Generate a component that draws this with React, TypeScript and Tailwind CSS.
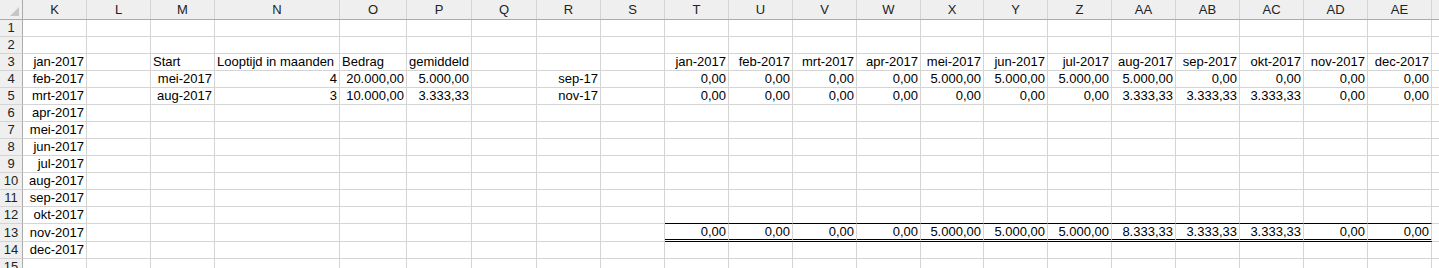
import React from 'react';

type Col = { name: string; w: number; label?: boolean };

const cols: Col[] = [
  { name: 'K', w: 64 },
  { name: 'L', w: 64 },
  { name: 'M', w: 64 },
  { name: 'N', w: 125 },
  { name: 'O', w: 67 },
  { name: 'P', w: 65 },
  { name: 'Q', w: 65 },
  { name: 'R', w: 64 },
  { name: 'S', w: 64 },
  { name: 'T', w: 64 },
  { name: 'U', w: 64 },
  { name: 'V', w: 64 },
  { name: 'W', w: 64 },
  { name: 'X', w: 63 },
  { name: 'Y', w: 64 },
  { name: 'Z', w: 64 },
  { name: 'AA', w: 64 },
  { name: 'AB', w: 64 },
  { name: 'AC', w: 64 },
  { name: 'AD', w: 64 },
  { name: 'AE', w: 64 },
  // AF sits mostly off screen, its letter is not visible
  { name: 'AF', w: 64, label: false },
];

const months = ['jan', 'feb', 'mrt', 'apr', 'mei', 'jun', 'jul', 'aug', 'sep', 'okt', 'nov', 'dec'].map(
  (m) => `${m}-2017`
);

const row4 = ['0,00', '0,00', '0,00', '0,00', '5.000,00', '5.000,00', '5.000,00', '5.000,00', '0,00', '0,00', '0,00', '0,00'];
const row5 = ['0,00', '0,00', '0,00', '0,00', '0,00', '0,00', '0,00', '3.333,33', '3.333,33', '3.333,33', '0,00', '0,00'];
const row13 = ['0,00', '0,00', '0,00', '0,00', '5.000,00', '5.000,00', '5.000,00', '8.333,33', '3.333,33', '3.333,33', '0,00', '0,00'];

type Cell = { v: string; left?: boolean };

// cell contents keyed by row number, then column letter
function buildData() {
  const data: Record<number, Record<string, Cell>> = {};
  for (let r = 1; r <= 15; r++) data[r] = {};
  months.forEach((m, i) => {
    data[i + 3].K = { v: m };
  });
  const tCols = cols.slice(9, 21).map((c) => c.name);
  data[3].M = { v: 'Start', left: true };
  data[3].N = { v: 'Looptijd in maanden', left: true };
  data[3].O = { v: 'Bedrag', left: true };
  data[3].P = { v: 'gemiddeld', left: true };
  data[4].M = { v: 'mei-2017' };
  data[4].N = { v: '4' };
  data[4].O = { v: '20.000,00' };
  data[4].P = { v: '5.000,00' };
  data[4].R = { v: 'sep-17' };
  data[5].M = { v: 'aug-2017' };
  data[5].N = { v: '3' };
  data[5].O = { v: '10.000,00' };
  data[5].P = { v: '3.333,33' };
  data[5].R = { v: 'nov-17' };
  tCols.forEach((c, i) => {
    data[3][c] = { v: months[i] };
    data[4][c] = { v: row4[i] };
    data[5][c] = { v: row5[i] };
    data[13][c] = { v: row13[i] };
  });
  return { data, tCols };
}

const { data, tCols } = buildData();

function rowHeight(r: number) {
  return r === 13 ? 'h-[18px]' : 'h-[17px]';
}

export default function App() {
  const rows = Array.from({ length: 15 }, (_, i) => i + 1);

  return (
    <div
      className="w-[1439px] h-[268px] overflow-hidden bg-white text-[13px] text-black"
      style={{ fontFamily: '"Liberation Sans", Arial, sans-serif' }}
    >
      {/* column headers */}
      <div className="flex h-[20px] bg-[#efefef] border-b border-[#ababab] text-[#222]">
        <div className="w-[23px] shrink-0 border-r border-[#ababab] flex items-end justify-end pr-[3px] pb-[3px]">
          <svg width="9" height="9" viewBox="0 0 9 9">
            <polygon points="9,0 9,9 0,9" fill="#c6c6c6" />
          </svg>
        </div>
        {cols.map((c) => (
          <div
            key={c.name}
            className="shrink-0 border-r border-[#d4d4d4] flex items-center justify-center leading-[16px]"
            style={{ width: c.w }}
          >
            {c.label === false ? '' : c.name}
          </div>
        ))}
      </div>

      {rows.map((r) => (
        <div key={r} className={`flex ${rowHeight(r)}`}>
          <div className="w-[23px] shrink-0 bg-[#efefef] border-r border-b border-[#ababab] border-b-[#d4d4d4] text-[#222] flex items-center justify-center leading-[16px]">
            {r}
          </div>
          {cols.map((c) => {
            const cell = data[r][c.name];
            const isTotalCol = tCols.includes(c.name);
            let border = 'border-b border-[#d4d4d4]';
            if (isTotalCol && r === 12) border = 'border-b border-b-black border-r-[#d4d4d4]';
            if (isTotalCol && r === 13) border = 'border-b-[3px] border-double border-b-black border-r-[#d4d4d4]';
            return (
              <div
                key={c.name}
                className={`shrink-0 border-r border-[#d4d4d4] ${border} flex items-center leading-[16px] whitespace-nowrap overflow-visible ${
                  cell?.left ? 'justify-start pl-[2px]' : 'justify-end pr-[2px]'
                }`}
                style={{ width: c.w }}
              >
                {cell?.v}
              </div>
            );
          })}
        </div>
      ))}
    </div>
  );
}
